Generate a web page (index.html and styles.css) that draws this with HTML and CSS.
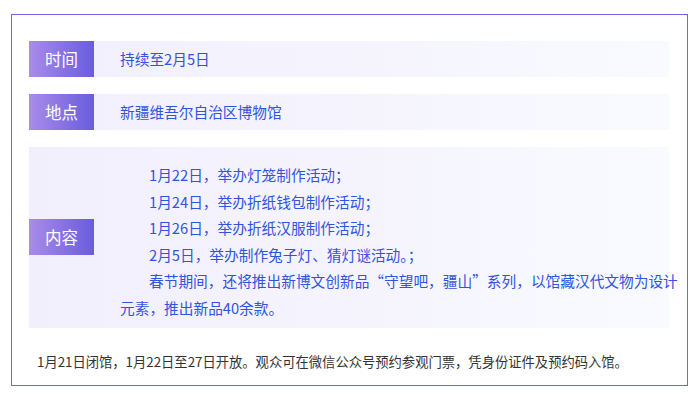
FILE: index.html
```html
<!DOCTYPE html>
<html lang="zh-CN">
<head>
<meta charset="utf-8">
<link rel="stylesheet" href="styles.css">
</head>
<body>
<div class="frame">
  <div class="row">
    <div class="label">时间</div>
    <div class="value">持续至2月5日</div>
  </div>
  <div class="row">
    <div class="label">地点</div>
    <div class="value">新疆维吾尔自治区博物馆</div>
  </div>
  <div class="row row-tall">
    <div class="label">内容</div>
    <div class="value content">
      <p>1月22日，举办灯笼制作活动；</p>
      <p>1月24日，举办折纸钱包制作活动；</p>
      <p>1月26日，举办折纸汉服制作活动；</p>
      <p>2月5日，举办制作兔子灯、猜灯谜活动。；</p>
      <p>春节期间，还将推出新博文创新品“守望吧，疆山”系列，以馆藏汉代文物为设计元素，推出新品40余款。</p>
    </div>
  </div>
  <div class="footer">1月21日闭馆，1月22日至27日开放。观众可在微信公众号预约参观门票，凭身份证件及预约码入馆。</div>
</div>
</body>
</html>
```

FILE: styles.css
```css
html, body {
  margin: 0;
  padding: 0;
  background: #ffffff;
}
body {
  font-family: "Noto Sans CJK SC", "Noto Sans", sans-serif;
  padding: 14px 0 0 11px;
}
.frame {
  box-sizing: border-box;
  width: 677px;
  border: 1px solid #7066ee;
  padding: 26px 18px 13px 17px;
  display: flex;
  flex-direction: column;
  gap: 17px;
}
.row {
  display: flex;
  align-items: center;
  height: 36px;
  background: linear-gradient(90deg, #f2effd 0%, #f5f4fe 50%, #f9faff 100%);
}
.row-tall {
  height: auto;
}
.label {
  flex: 0 0 65px;
  height: 36px;
  display: flex;
  align-items: center;
  justify-content: center;
  color: #ffffff;
  font-size: 16.5px;
  background: linear-gradient(90deg, #a98be9 0%, #6a5cdf 100%);
}
.value {
  flex: 1;
  padding-left: 26px;
  color: #3053e0;
  font-size: 14.7px;
  line-height: 20px;
}
.content {
  flex: 0 0 562px;
  padding: 15px 0 6px 0;
  margin-left: 26px;
  line-height: 26.6px;
  margin-right: -14px;
}
.content p {
  margin: 0;
  text-indent: 29px;
}
.footer {
  margin-top: 7px;
  padding-left: 8px;
  color: #333333;
  font-size: 13.3px;
  line-height: 20px;
}
```
